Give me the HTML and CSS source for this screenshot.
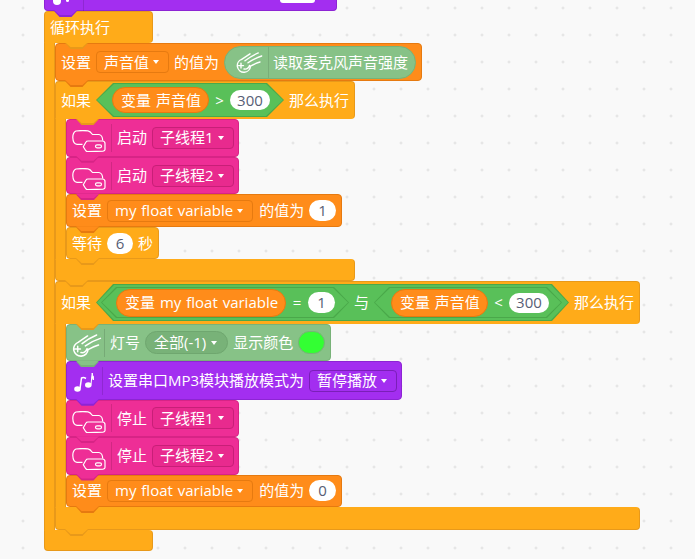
FILE: index.html
```html
<!DOCTYPE html>
<html lang="zh">
<head>
  <meta charset="utf-8">
  <title>循环执行</title>
  <link rel="stylesheet" href="styles.css">
</head>
<body>
  <svg class="defs" width="0" height="0">
    <symbol id="cloud" viewBox="0 0 34 22">
      <path d="M10.500 14.300H5Q1 14 .8 7.500Q.8 2.500 4 1Q10 .2 16 .8Q18 1 20.500 4.500L27 4.500Q30.500 5 30.700 10.500" fill="none" stroke="#fff" stroke-width="1.200"/>
      <path d="M11.300 16.700L14 12Q14.500 11 16 11H30.500Q33 11.200 33 13.500V19.500Q33 21 31 21.200L15.500 21.700Q14.500 21.700 13.800 20.700Z" fill="none" stroke="#fff" stroke-width="1.200"/>
      <rect x="23.500" y="14.800" width="6" height="3" rx="1.500" fill="none" stroke="#fff" stroke-width="1.200"/>
    </symbol>
    <symbol id="comet" viewBox="0 0 27 21">
      <path d="M5.700 7.400A6.600 6.600 0 1 0 14.500 14.200M5.700 7.400L14 1.800M9 8.800Q15 4 22.300 .9M12 10.800Q18 6.500 25.700 4M14.500 14.200Q19 11.500 24 10M2.500 13.600H7.500M5 11.100V16.100M8 17Q12 17.800 13.500 13.500" fill="none" stroke="#fff" stroke-width="1.400" stroke-linecap="round"/>
    </symbol>
    <symbol id="notes" viewBox="0 0 20 21">
      <ellipse cx="3.500" cy="17" rx="3.300" ry="2.800" fill="#fff"/>
      <ellipse cx="14.300" cy="13" rx="3.300" ry="2.800" fill="#fff"/>
      <path d="M6 16.500L7.500 6Q9.500 5 12 6.500" fill="none" stroke="#fff" stroke-width="1.500"/>
      <path d="M17 12.500L18.200 1Q18.500 4.500 20 5.500L19.500 8Q18.500 6.500 17.600 6" fill="#fff" stroke="#fff" stroke-width="1"/>
    </symbol>
  </svg>

  <div class="canvas">
    <div class="block sound block-top">
      <span class="top-dot"></span>
      <span class="top-dot small"></span>
      <span class="sep"></span>
      <span class="top-pill"></span>
    </div>

    <div class="c-block control">
      <div class="block head head-forever">循环执行</div>
      <div class="mouth">
        <div class="arm"></div>
        <div class="stack">
          <div class="block data">
            设置
            <span class="drop">声音值<i class="caret"></i></span>
            的值为
            <span class="ext-pill">
              <span class="ext-icon"><svg width="27" height="21"><use href="#comet"/></svg></span>
              <span>读取麦克风声音强度</span>
            </span>
          </div>

          <div class="c-block control">
            <div class="block head head-if1">
              如果
              <span class="bool bool-if1">
                <span class="reporter">变量 声音值</span>
                <span class="op">&gt;</span>
                <span class="num wide">300</span>
              </span>
              那么执行
            </div>
            <div class="mouth mouth-if1">
              <div class="arm"></div>
              <div class="stack">
                <div class="block thread">
                  <svg class="icon-cloud" width="34" height="22"><use href="#cloud"/></svg>
                  <span class="sep"></span>
                  启动
                  <span class="drop">子线程1<i class="caret"></i></span>
                </div>
                <div class="block thread">
                  <svg class="icon-cloud" width="34" height="22"><use href="#cloud"/></svg>
                  <span class="sep"></span>
                  启动
                  <span class="drop">子线程2<i class="caret"></i></span>
                </div>
                <div class="block data block-short">
                  设置
                  <span class="drop">my float variable<i class="caret"></i></span>
                  的值为
                  <span class="num">1</span>
                </div>
                <div class="block control block-wait">
                  等待
                  <span class="num">6</span>
                  秒
                </div>
              </div>
            </div>
            <div class="block foot foot-if1"></div>
          </div>

          <div class="c-block control">
            <div class="block head head-if2">
              如果
              <span class="bool bool-outer">
                <span class="bool bool-a">
                  <span class="reporter tall">变量 my float variable</span>
                  <span class="op">=</span>
                  <span class="num">1</span>
                </span>
                <span class="word">与</span>
                <span class="bool bool-b">
                  <span class="reporter tall">变量 声音值</span>
                  <span class="op">&lt;</span>
                  <span class="num wide">300</span>
                </span>
              </span>
              那么执行
            </div>
            <div class="mouth mouth-if2">
              <div class="arm"></div>
              <div class="stack">
                <div class="block led">
                  <svg class="icon-comet" width="30" height="23"><use href="#comet"/></svg>
                  <span class="sep"></span>
                  灯号
                  <span class="drop round">全部(-1)<i class="caret"></i></span>
                  显示颜色
                  <span class="swatch"></span>
                </div>
                <div class="block sound">
                  <svg class="icon-notes" width="20" height="21"><use href="#notes"/></svg>
                  <span class="sep"></span>
                  设置串口MP3模块播放模式为
                  <span class="drop">暂停播放<i class="caret"></i></span>
                </div>
                <div class="block thread">
                  <svg class="icon-cloud" width="34" height="22"><use href="#cloud"/></svg>
                  <span class="sep"></span>
                  停止
                  <span class="drop">子线程1<i class="caret"></i></span>
                </div>
                <div class="block thread">
                  <svg class="icon-cloud" width="34" height="22"><use href="#cloud"/></svg>
                  <span class="sep"></span>
                  停止
                  <span class="drop">子线程2<i class="caret"></i></span>
                </div>
                <div class="block data block-short">
                  设置
                  <span class="drop">my float variable<i class="caret"></i></span>
                  的值为
                  <span class="num">0</span>
                </div>
              </div>
            </div>
            <div class="block foot foot-if2"></div>
          </div>
        </div>
      </div>
      <div class="block foot foot-forever"></div>
    </div>
  </div>
</body>
</html>
```

FILE: styles.css
```css
* {
  box-sizing: border-box;
}

html, body {
  margin: 0;
  height: 100%;
  overflow: hidden;
}

body {
  background-color: #f9f9f9;
  background-image: radial-gradient(circle, #dfdfdf 1px, transparent 1.2px);
  background-size: 27px 27px;
  background-position: 9.5px 21.5px;
  font-family: "Open Sans", "Noto Sans CJK SC", sans-serif;
  font-size: 15px;
  line-height: 1;
  word-spacing: 1px;
  color: #fff;
}

.defs {
  position: absolute;
}

symbol {
  overflow: visible;
}

.canvas {
  padding-left: 44px;
}

/* block colours */
.control { --fill: #ffab19; --edge: #e8991a; }
.data { --fill: #ff8c1a; --edge: #e67a10; }
.thread { --fill: #ee2e96; --edge: #d72486; }
.sound { --fill: #a32ef0; --edge: #8d24d4; }
.led { --fill: #87c287; --edge: #78b278; }

.block {
  position: relative;
  display: flex;
  align-items: center;
  gap: 5px;
  width: fit-content;
  height: 38px;
  padding: 0 5px;
  background: var(--fill);
  border: 1px solid var(--edge);
  border-radius: 4px;
  white-space: nowrap;
}

/* the tab under every block */
.block::before,
.block::after {
  content: "";
  position: absolute;
  left: 9px;
  width: 23px;
  clip-path: polygon(0 0, 100% 0, 76% 100%, 24% 100%);
}

.block::before {
  bottom: -7px;
  height: 6px;
  background: var(--edge);
}

.block::after {
  bottom: -5px;
  height: 5px;
  background: var(--fill);
}

.c-block {
  position: relative;
  display: flex;
  flex-direction: column;
  width: fit-content;
  background: none;
}

.stack {
  display: flex;
  flex-direction: column;
}

.stack > *,
.c-block > *,
.canvas > * {
  position: relative;
}

.stack > :nth-child(1) { z-index: 6; }
.stack > :nth-child(2) { z-index: 5; }
.stack > :nth-child(3) { z-index: 4; }
.stack > :nth-child(4) { z-index: 3; }
.stack > :nth-child(5) { z-index: 2; }
.stack > :nth-child(6) { z-index: 1; }

.canvas > :nth-child(1) { z-index: 2; }
.canvas > :nth-child(2) { z-index: 1; }

.c-block > .head { z-index: 3; }
.c-block > .mouth { z-index: 2; }
.c-block > .foot { z-index: 1; }

.head {
  border-bottom-color: transparent;
  border-bottom-left-radius: 0;
}

.head::before,
.head::after {
  left: 20px;
}

.foot {
  border-top-color: transparent;
  border-top-left-radius: 0;
}

.mouth {
  display: flex;
}

.arm {
  flex: none;
  width: 11px;
  background: var(--fill);
  border-left: 1px solid var(--edge);
  border-right: 1px solid var(--edge);
}

.head-forever { width: 109px; height: 32px; }
.foot-forever { width: 109px; height: 21px; }

/* nothing snaps under the loop */
.foot-forever::before,
.foot-forever::after {
  display: none;
}

.head-if1 { width: 300px; }
.mouth-if1 { height: 140px; }
.foot-if1 { width: 300px; height: 22px; }

.head-if2 { width: 585px; height: 43px; }
.mouth-if2 { height: 183px; }
.foot-if2 { width: 585px; height: 23px; }

/* top block, cut off by the window */
.block-top {
  width: 293px;
  height: 11px;
  padding: 0 0 0 8px;
  align-items: flex-start;
  border-top: 0;
  border-radius: 0 0 4px 4px;
  overflow: visible;
}

.top-dot {
  width: 8px;
  height: 6px;
  margin-top: -1px;
  background: #fff;
  border-radius: 0 0 4px 4px;
}

.top-dot.small {
  width: 3px;
  height: 3px;
}

.block-top .sep {
  height: 11px;
  margin: 0 0 0 9px;
}

.top-pill {
  width: 35px;
  height: 3px;
  margin-left: 191px;
  background: #fff;
  border-radius: 0 0 10px 10px;
}

.block-short { height: 33px; width: 276px; }
.block-short .drop { margin-right: 1px; }
.block-wait { height: 32px; width: 93px; }

.sep {
  flex: none;
  align-self: center;
  width: 1px;
  height: 28px;
  background: rgba(0, 0, 0, .12);
}

.icon-cloud { flex: none; margin-top: 7px; }
.icon-comet { flex: none; margin: 6px -3px 0 0; }
.icon-notes { flex: none; margin: 4px 3px 0 2px; }

.thread { width: 173px; }
.led { width: 265px; }
.sound:not(.block-top) { width: 336px; height: 39px; }

.drop {
  display: inline-flex;
  align-items: center;
  gap: 4px;
  height: 22px;
  padding: 0 9px 0 7px;
  background: var(--fill);
  border: 1px solid var(--edge);
  border-radius: 4px;
}

.drop.round {
  height: 23px;
  gap: 5px;
  padding: 0 10px 0 8px;
  background: #78b278;
  border-color: #6fa76f;
  border-radius: 12px;
}

.thread .drop { background: #e82a8e; border-color: #c81f78; }
.sound .drop { border-color: #7a1fb8; }

.caret {
  width: 0;
  height: 0;
  border: 3px solid transparent;
  border-top: 4px solid #fff;
  border-bottom: 0;
}

.num {
  display: inline-flex;
  align-items: center;
  justify-content: center;
  width: 27px;
  height: 21px;
  background: #fff;
  color: #575e75;
  border-radius: 11px;
}

.num.wide {
  width: 40px;
  height: 20px;
}

.swatch {
  width: 27px;
  height: 23px;
  background: #33ff33;
  border: 1px solid #78b278;
  border-radius: 12px;
}

/* extension reporter inside the set block */
.ext-pill {
  display: inline-flex;
  align-items: center;
  height: 33px;
  padding-right: 7px;
  background: #87c287;
  border: 1px solid #78b278;
  border-radius: 17px;
}

.ext-icon {
  display: flex;
  align-items: center;
  height: 100%;
  padding: 0 5px 0 11px;
  margin-right: 4px;
  border-right: 1px solid rgba(0, 0, 0, .1);
}

/* hexagon conditions: dark shape with a lighter one inside */
.bool {
  position: relative;
  display: inline-flex;
  align-items: center;
  justify-content: space-between;
  height: 34px;
  --tip: 17px;
  background: #4aa84a;
  clip-path: polygon(0 50%, var(--tip) 0, calc(100% - var(--tip)) 0, 100% 50%, calc(100% - var(--tip)) 100%, var(--tip) 100%);
}

.bool::before {
  content: "";
  position: absolute;
  inset: 1px;
  background: #59c059;
  clip-path: polygon(0 50%, var(--tip) 0, calc(100% - var(--tip)) 0, 100% 50%, calc(100% - var(--tip)) 100%, var(--tip) 100%);
}

.bool > * {
  position: relative;
}

.bool-if1 { width: 188px; padding: 0 14px 0 16px; }
.bool-outer { width: 473px; height: 37px; padding: 0 7px 0 5px; }
.bool-a { width: 248px; height: 31px; padding: 0 14px 0 15px; --tip: 15px; }
.bool-b { width: 188px; height: 31px; padding: 0 13px 0 17px; --tip: 15px; }

.reporter {
  display: inline-flex;
  align-items: center;
  height: 26px;
  padding: 0 7px 0 8px;
  background: #ff8c1a;
  border: 1px solid #e67a10;
  border-radius: 14px;
}

.reporter.tall {
  height: 28px;
}

.op {
  width: 9px;
  text-align: center;
}
```
